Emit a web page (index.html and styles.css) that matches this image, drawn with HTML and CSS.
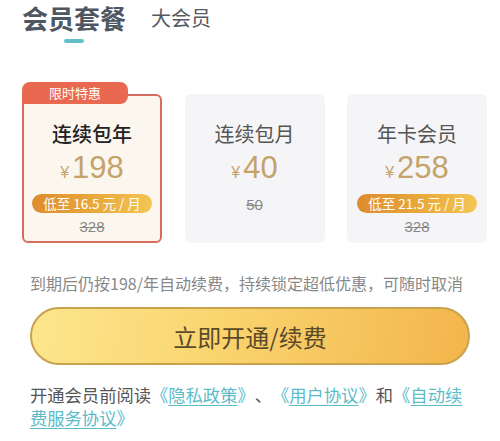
FILE: index.html
```html
<!DOCTYPE html>
<html lang="zh-CN">
<head>
<meta charset="utf-8">
<link rel="stylesheet" href="styles.css">
</head>
<body>
<div class="page">
  <div class="tabs">
    <div class="tab active">
      <span class="tab-label">会员套餐</span>
      <span class="indicator"></span>
    </div>
    <div class="tab">
      <span class="tab-label">大会员</span>
    </div>
  </div>

  <div class="plans">
    <div class="plan selected">
      <div class="badge">限时特惠</div>
      <div class="plan-name">连续包年</div>
      <div class="price"><span class="yen">¥</span><span class="amount">198</span></div>
      <div class="pill">低至 16.5 元 / 月</div>
      <div class="orig">328</div>
    </div>
    <div class="plan">
      <div class="plan-name">连续包月</div>
      <div class="price"><span class="yen">¥</span><span class="amount">40</span></div>
      <div class="orig">50</div>
    </div>
    <div class="plan">
      <div class="plan-name">年卡会员</div>
      <div class="price"><span class="yen">¥</span><span class="amount">258</span></div>
      <div class="pill">低至 21.5 元 / 月</div>
      <div class="orig">328</div>
    </div>
  </div>

  <p class="note">到期后仍按198/年自动续费，持续锁定超低优惠，可随时取消</p>

  <button class="cta">立即开通/续费</button>

  <p class="agree">开通会员前阅读<span class="link">《</span><a class="link-text">隐私政策</a><span class="link">》</span>、<span class="link">《</span><a class="link-text">用户协议</a><span class="link">》</span>和<span class="link">《</span><a class="link-text">自动续费服务协议</a><span class="link">》</span></p>
</div>
</body>
</html>
```

FILE: styles.css
```css
* {
  box-sizing: border-box;
}

html, body {
  margin: 0;
  padding: 0;
  background: #ffffff;
}

body {
  font-family: "Noto Sans CJK SC", "Noto Sans", sans-serif;
  color: #555555;
  width: 500px;
  height: 441px;
  overflow: hidden;
  text-spacing-trim: space-all;
}

.page {
  display: flex;
  flex-direction: column;
}

/* Tabs */
.tabs {
  display: flex;
  align-items: flex-start;
  gap: 25px;
  padding-left: 22px;
  padding-top: 2px;
}

.tab {
  display: flex;
  flex-direction: column;
  align-items: center;
}

.tab-label {
  font-size: 20px;
  line-height: 32px;
  color: #555a60;
}

.tab.active .tab-label {
  font-size: 26px;
  font-weight: 700;
  color: #4e5761;
}

.indicator {
  display: block;
  width: 20px;
  height: 4px;
  margin-top: 5px;
  border-radius: 2px;
  background: #62bfca;
}

/* Plans */
.plans {
  display: grid;
  grid-template-columns: repeat(3, 140px);
  column-gap: 22.5px;
  padding-left: 22px;
  margin-top: 51px;
}

.plan {
  position: relative;
  height: 149px;
  border: 2px solid transparent;
  border-radius: 6px;
  background: #f5f5f7;
  display: flex;
  flex-direction: column;
  align-items: center;
  padding: 25px 8px 0;
}

.plan.selected {
  background: #fbf7ee;
  border-color: #d66c5f;
}

.badge {
  position: absolute;
  top: -14px;
  left: -2px;
  width: 106px;
  height: 22px;
  background: #e8694f;
  color: #ffffff;
  font-size: 13px;
  line-height: 22px;
  text-align: center;
  border-radius: 8px 8px 8px 0;
}

.plan-name {
  font-size: 20px;
  line-height: 26px;
  color: #555555;
}

.plan.selected .plan-name {
  color: #222222;
  font-weight: 500;
}

.price {
  margin-top: 4px;
  height: 34px;
  display: flex;
  align-items: baseline;
  color: #c4a26a;
  font-family: "Liberation Sans", "Noto Sans CJK SC", sans-serif;
}

.yen {
  font-size: 16px;
  margin-right: 3px;
}

.amount {
  font-size: 31px;
  line-height: 34px;
}

.pill {
  margin-top: 9px;
  width: 120px;
  height: 19px;
  border-radius: 10px;
  background: linear-gradient(90deg, #de8c2e 0%, #e9aa3c 55%, #f3c654 100%);
  color: #ffffff;
  font-size: 13.5px;
  line-height: 19px;
  text-align: center;
  white-space: nowrap;
}

.orig {
  margin-top: 5px;
  font-family: "Liberation Sans", "Noto Sans CJK SC", sans-serif;
  font-size: 15px;
  line-height: 18px;
  color: #888888;
  text-decoration: line-through;
}

.price + .orig {
  margin-top: 11px;
}

/* Note */
.note {
  margin: 29px 30px 0;
  font-size: 16px;
  line-height: 22px;
  color: #888888;
  white-space: nowrap;
}

/* Button */
.cta {
  margin: 13px 30px 0;
  height: 58px;
  border: 2px solid #c9a24e;
  border-radius: 29px;
  background: linear-gradient(100deg, #fde68e 0%, #fad671 40%, #f3b54c 100%);
  color: #5b4a2a;
  font-family: "Noto Sans CJK SC", sans-serif;
  font-size: 24px;
  padding: 0;
  cursor: pointer;
}

/* Agreement */
.agree {
  margin: 18px 30px 0;
  font-size: 17.3px;
  line-height: 23px;
  color: #555555;
}

.link {
  color: #5bbcc8;
}

.link-text {
  color: #5bbcc8;
  text-decoration: underline;
  text-decoration-color: #5bbcc8;
  text-underline-offset: 3px;
}
```
